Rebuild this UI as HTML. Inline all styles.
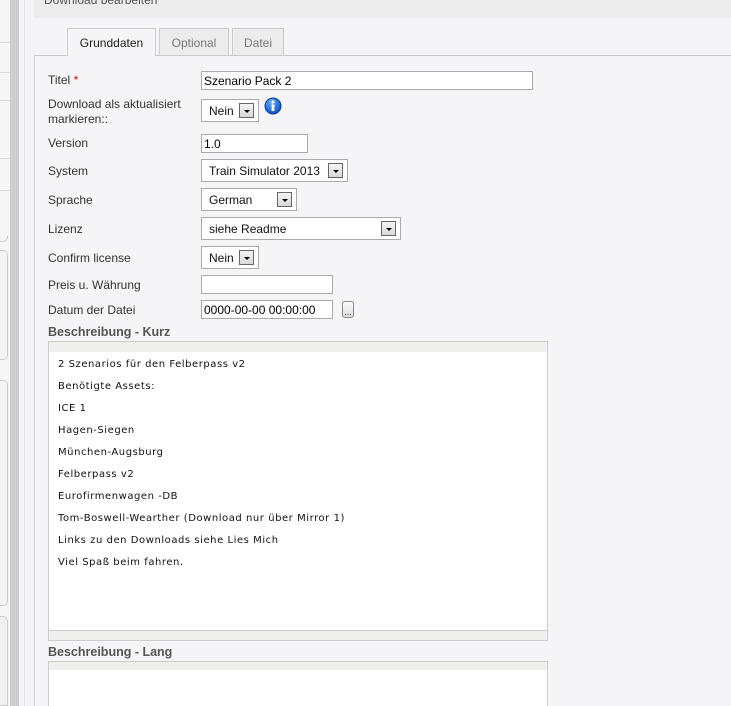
<!DOCTYPE html>
<html style="overflow:hidden;height:706px"><head><meta charset="utf-8"><style>
*{margin:0;padding:0;box-sizing:border-box}
body{width:731px;height:706px;overflow:hidden;background:#f5f5f7;font-family:"Liberation Sans",Arial,sans-serif;font-size:12px;color:#333;position:relative}
.a{position:absolute}
.lbl{position:absolute;left:48px;font-size:12px;color:#333}
.inp{position:absolute;left:201px;height:19px;border:1px solid #aaa;background:#fff;font-size:12px;color:#000;padding:2px 2px 0}
.sel{position:absolute;left:201px;height:23px;border:1px solid #aaa;background:#fff;font-size:12px;color:#111;padding:4px 7px 0}
.sel .b{position:absolute;right:4px;top:3px;width:15px;height:15px;border:1px solid #666;background:linear-gradient(#f4f4f4,#d8d8d8)}
.sel .b:after{content:"";position:absolute;left:4px;top:6px;border-left:3px solid transparent;border-right:3px solid transparent;border-top:3px solid #000}
.tab{position:absolute;top:28px;height:27px;border:1px solid #ccc;border-bottom:none;background:#ececec;color:#777;font-size:12px;text-align:center;padding-top:7px}
.ta{position:absolute;left:48px;width:500px;border:1px solid #ccc;background:#fff;overflow:hidden}
.ta p{font-family:"DejaVu Sans",Verdana,sans-serif;font-size:10px;letter-spacing:0.55px;color:#111;position:absolute;left:9px;white-space:nowrap}
h3{position:absolute;left:48px;font-size:12.5px;font-weight:bold;color:#555}
</style></head><body>
<div class="a" style="left:0;top:0;width:10px;height:706px;background:#f6f6f6"></div>
<div class="a" style="left:0;top:42px;width:10px;height:1px;background:#ddd"></div>
<div class="a" style="left:0;top:72px;width:10px;height:1px;background:#ddd"></div>
<div class="a" style="left:0;top:100px;width:10px;height:1px;background:#ddd"></div>
<div class="a" style="left:0;top:158px;width:10px;height:1px;background:#ddd"></div>
<div class="a" style="left:0;top:190px;width:10px;height:1px;background:#ddd"></div>
<div class="a" style="left:0;top:236px;width:8px;height:6px;border-bottom:1px solid #ccc;border-right:1px solid #ccc;border-radius:0 0 5px 0"></div>
<div class="a" style="left:0;top:250px;width:8px;height:110px;border:1px solid #ccc;border-left:none;border-radius:0 5px 5px 0;background:#f4f4f4"></div>
<div class="a" style="left:0;top:380px;width:8px;height:226px;border:1px solid #ccc;border-left:none;border-radius:0 5px 5px 0;background:#f4f4f4"></div>
<div class="a" style="left:0;top:616px;width:8px;height:90px;border:1px solid #ccc;border-left:none;border-radius:0 5px 0 0;background:#f0f0f0"></div>
<div class="a" style="left:10px;top:0;width:9px;height:706px;background:repeating-linear-gradient(90deg,#c8c8c8 0 1px,#d6d6d6 1px 2px)"></div>
<div class="a" style="left:19px;top:0;width:15px;height:706px;background:#f5f5f7"></div>
<div class="a" style="left:24px;top:0;width:1px;height:706px;background:#e4e4e4"></div>
<div class="a" style="left:34px;top:0;width:697px;height:18px;background:#ececec;color:#555;font-size:12px;padding-left:10px;line-height:0">Download bearbeiten</div>
<div class="a" style="left:34px;top:55px;width:697px;height:651px;border-top:1px solid #c8c8c8;border-left:1px solid #d4d4d4"></div>
<div class="tab" style="left:67px;width:89px;background:#f5f5f7;color:#222;height:28px">Grunddaten</div>
<div class="tab" style="left:159px;width:70px">Optional</div>
<div class="tab" style="left:232px;width:52px">Datei</div>

<div class="lbl" style="top:73px">Titel <span style="color:#e00">*</span></div>
<div class="inp" style="top:71px;width:332px">Szenario Pack 2</div>
<div class="lbl" style="top:97px;line-height:15px">Download als aktualisiert<br>markieren::</div>
<div class="sel" style="top:99px;width:58px">Nein<span class="b"></span></div>
<svg class="a" style="left:264px;top:97px" width="18" height="18" viewBox="0 0 18 18"><defs><radialGradient id="g" cx="40%" cy="30%" r="70%"><stop offset="0" stop-color="#6ab0ff"/><stop offset="1" stop-color="#0a4fc0"/></radialGradient></defs><circle cx="9" cy="9" r="8" fill="url(#g)" stroke="#0a3f9c"/><circle cx="9" cy="5" r="1.6" fill="#fff"/><rect x="7.6" y="7.5" width="2.8" height="6.5" fill="#fff"/></svg>
<div class="lbl" style="top:136px">Version</div>
<div class="inp" style="top:134px;width:107px">1.0</div>
<div class="lbl" style="top:164px">System</div>
<div class="sel" style="top:159px;width:147px">Train Simulator 2013<span class="b"></span></div>
<div class="lbl" style="top:193px">Sprache</div>
<div class="sel" style="top:188px;width:96px">German<span class="b"></span></div>
<div class="lbl" style="top:222px">Lizenz</div>
<div class="sel" style="top:217px;width:200px">siehe Readme<span class="b"></span></div>
<div class="lbl" style="top:251px">Confirm license</div>
<div class="sel" style="top:246px;width:58px">Nein<span class="b"></span></div>
<div class="lbl" style="top:278px">Preis u. Währung</div>
<div class="inp" style="top:275px;width:132px"></div>
<div class="lbl" style="top:303px">Datum der Datei</div>
<div class="inp" style="top:300px;width:132px">0000-00-00 00:00:00</div>
<div class="a" style="left:342px;top:301px;width:12px;height:17px;border:1px solid #888;border-radius:3px;background:linear-gradient(#fafafa,#ddd);font-size:9px;text-align:center;line-height:20px">...</div>

<h3 style="top:325px">Beschreibung - Kurz</h3>
<div class="ta" style="top:341px;height:300px">
<div class="a" style="left:0;top:0;width:498px;height:10px;background:#efefed"></div>
<p style="top:17px">2 Szenarios für den Felberpass v2</p>
<p style="top:39px">Benötigte Assets:</p>
<p style="top:61px">ICE 1</p>
<p style="top:83px">Hagen-Siegen</p>
<p style="top:105px">München-Augsburg</p>
<p style="top:127px">Felberpass v2</p>
<p style="top:149px">Eurofirmenwagen -DB</p>
<p style="top:171px">Tom-Boswell-Wearther (Download nur über Mirror 1)</p>
<p style="top:193px">Links zu den Downloads siehe Lies Mich</p>
<p style="top:215px">Viel Spaß beim fahren.</p>
<div class="a" style="left:0;top:288px;width:498px;height:10px;background:#efefed;border-top:1px solid #ccc"></div>
</div>
<h3 style="top:645px">Beschreibung - Lang</h3>
<div class="ta" style="top:661px;height:45px;border-bottom:none">
<div class="a" style="left:0;top:0;width:498px;height:8px;background:#efefed"></div>
</div>
</body></html>
